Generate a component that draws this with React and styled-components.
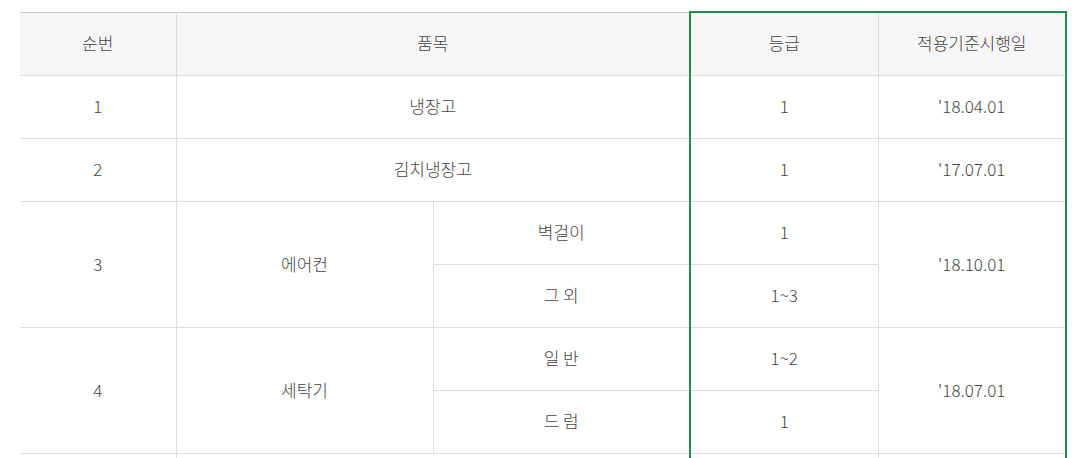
import React from "react";
import styled, { createGlobalStyle } from "styled-components";

const GlobalStyle = createGlobalStyle`
  html, body {
    margin: 0;
    padding: 0;
    background: #fff;
  }
  body {
    font-family: "Noto Sans CJK KR", "Noto Sans", sans-serif;
  }
`;

const GREEN = "#24874c";

const Wrap = styled.div`
  padding: 11px 8px 0 20px;
`;

const Table = styled.table`
  width: 100%;
  border-collapse: collapse;
  table-layout: fixed;
  color: #444;
  font-size: 17px;
  font-weight: 300;
`;

const Th = styled.th`
  height: 59px;
  padding: 0 0 3px;
  font-weight: 300;
  background: #f6f6f6;
  border: 1px solid #ddd;
  border-top-color: #ccc;
  text-align: center;
  &:first-child { border-left: none; }
  ${(p) => p.$hl === "left" && `border-left: 2px solid ${GREEN}; border-top: 2px solid ${GREEN};`}
  ${(p) => p.$hl === "right" && `border-right: 2px solid ${GREEN}; border-top: 2px solid ${GREEN};`}
`;

const Td = styled.td`
  height: 59px;
  padding: 0 0 3px;
  text-align: center;
  border: 1px solid #ddd;
  &:first-child { border-left: none; }
  ${(p) => p.$hl === "left" && `border-left: 2px solid ${GREEN};`}
  ${(p) => p.$hl === "right" && `border-right: 2px solid ${GREEN};`}
`;

const rows = [
  { no: "1", name: "냉장고", grade: "1", date: "'18.04.01" },
  { no: "2", name: "김치냉장고", grade: "1", date: "'17.07.01" },
  {
    no: "3",
    name: "에어컨",
    date: "'18.10.01",
    subs: [
      { sub: "벽걸이", grade: "1" },
      { sub: "그 외", grade: "1~3" },
    ],
  },
  {
    no: "4",
    name: "세탁기",
    date: "'18.07.01",
    subs: [
      { sub: "일 반", grade: "1~2" },
      { sub: "드 럼", grade: "1" },
    ],
  },
  // next row starts just at the bottom edge of the view
  { no: "", name: "", grade: "", date: "" },
];

export default function App() {
  return (
    <Wrap>
      <GlobalStyle />
      <Table>
        <colgroup>
          <col style={{ width: 156 }} />
          <col style={{ width: 257 }} />
          <col style={{ width: 257 }} />
          <col style={{ width: 188 }} />
          <col style={{ width: 188 }} />
        </colgroup>
        <thead>
          <tr>
            <Th>순번</Th>
            <Th colSpan={2}>품목</Th>
            <Th $hl="left">등급</Th>
            <Th $hl="right">적용기준시행일</Th>
          </tr>
        </thead>
        <tbody>
          {rows.map((r, idx) =>
            r.subs ? (
              r.subs.map((s, i) => (
                <tr key={idx + "-" + i}>
                  {i === 0 && <Td rowSpan={r.subs.length}>{r.no}</Td>}
                  {i === 0 && <Td rowSpan={r.subs.length}>{r.name}</Td>}
                  <Td>{s.sub}</Td>
                  <Td $hl="left">{s.grade}</Td>
                  {i === 0 && (
                    <Td $hl="right" rowSpan={r.subs.length}>
                      {r.date}
                    </Td>
                  )}
                </tr>
              ))
            ) : (
              <tr key={idx}>
                <Td>{r.no}</Td>
                <Td colSpan={2}>{r.name}</Td>
                <Td $hl="left">{r.grade}</Td>
                <Td $hl="right">{r.date}</Td>
              </tr>
            )
          )}
        </tbody>
      </Table>
    </Wrap>
  );
}
